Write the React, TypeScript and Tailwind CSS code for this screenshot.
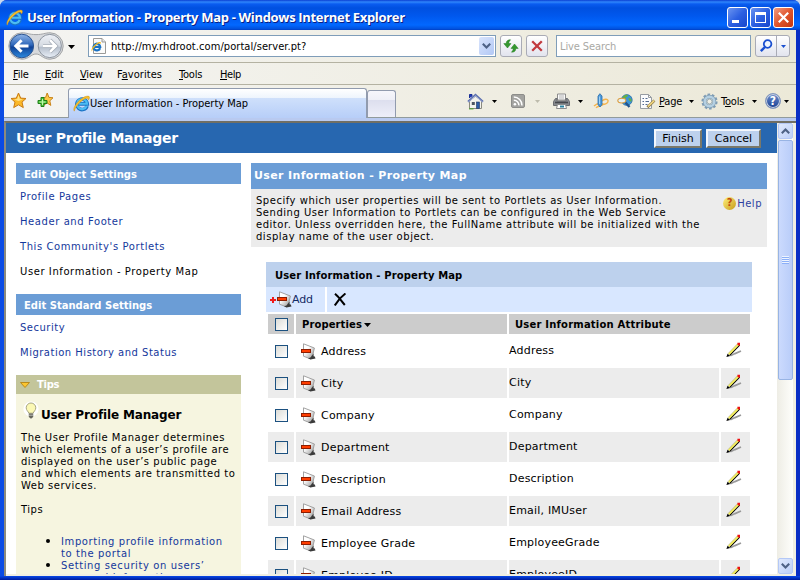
import type { ReactNode } from "react";

const properties = [
  { name: "Address", attribute: "Address" },
  { name: "City", attribute: "City" },
  { name: "Company", attribute: "Company" },
  { name: "Department", attribute: "Department" },
  { name: "Description", attribute: "Description" },
  { name: "Email Address", attribute: "Email, IMUser" },
  { name: "Employee Grade", attribute: "EmployeeGrade" },
  { name: "Employee ID", attribute: "EmployeeID" },
];

const objectLinks = ["Profile Pages", "Header and Footer", "This Community's Portlets"];
const standardLinks = ["Security", "Migration History and Status"];

function IELogo({ size }: { size: number }) {
  return (
    <svg width={size} height={size} viewBox="0 0 16 16" className="shrink-0">
      <path
        d="M13.2 10.3A4.9 4.9 0 1 1 13.4 8.4H5.4"
        fill="none"
        stroke="#1a72c4"
        strokeWidth="3.4"
      />
      <path d="M12.9 10.2A4.7 4.7 0 1 1 13.2 8.2H5.4" fill="none" stroke="#4cbcf2" strokeWidth="2" />
      <path
        d="M1.2 15.2C-.8 12.4 4 6 8.4 3.2C11.6 1 15.4 .2 15.5 2.2C15.6 3.2 14.9 4.2 14.4 4.8C14.4 2.4 12 2.8 9.4 4.6C5.4 7.4 1.8 12 1.2 15.2Z"
        fill="#f9c02a"
        stroke="#c98a12"
        strokeWidth=".4"
      />
    </svg>
  );
}

function Arrow({ color = "#000000" }: { color?: string }) {
  return (
    <svg width="5" height="3" viewBox="0 0 5 3" className="shrink-0">
      <path d="M0 0H5L2.5 3Z" fill={color} />
    </svg>
  );
}

function NavButtons() {
  return (
    <svg width="56" height="28" viewBox="0 0 56 28" className="shrink-0">
      <defs>
        <linearGradient id="back" x1="0" y1="0" x2="0" y2="1">
          <stop offset="0" stopColor="#8fb4e6" />
          <stop offset=".45" stopColor="#2f68bb" />
          <stop offset=".55" stopColor="#104296" />
          <stop offset="1" stopColor="#2d8be0" />
        </linearGradient>
        <linearGradient id="fwd" x1="0" y1="0" x2="0" y2="1">
          <stop offset="0" stopColor="#eef1f6" />
          <stop offset=".5" stopColor="#d5dae2" />
          <stop offset=".56" stopColor="#b6bfcc" />
          <stop offset="1" stopColor="#eaf0f8" />
        </linearGradient>
      </defs>
      <path
        d="M14 .8C19 .8 21 2.6 28 2.6S37 .8 42 .8A13.2 13.2 0 0 1 42 27.2C35 27.2 33 22 28 22S21 27.2 14 27.2A13.2 13.2 0 0 1 14 .8Z"
        fill="#d7d9dc"
        stroke="#a2a4a6"
      />
      <circle cx="13.8" cy="14" r="11.8" fill="url(#back)" stroke="#2c5592" strokeWidth="1" />
      <circle cx="41.8" cy="14" r="11.6" fill="url(#fwd)" stroke="#8d959f" strokeWidth="1" />
      <path d="M20.5 14H8M13.6 8.2L7.8 14L13.6 19.8" fill="none" stroke="#ffffff" strokeWidth="3" />
      <path d="M35 14H47.5M42 8.2L47.8 14L42 19.8" fill="none" stroke="#9ea6b2" strokeWidth="4" />
      <path d="M35 14H47.5M42 8.2L47.8 14L42 19.8" fill="none" stroke="#ffffff" strokeWidth="2.6" />
    </svg>
  );
}

function PageIcon() {
  return (
    <svg width="16" height="18" viewBox="0 0 16 18" className="shrink-0">
      <path d="M2.5 1.5H11L14.5 5V16.5H2.5Z" fill="#fbfbfa" stroke="#9a9a98" />
      <path d="M11 1.5V5H14.5" fill="#e6e6e6" stroke="#9a9a98" />
      <svg x="0" y="4" width="11" height="11" viewBox="0 0 16 16">
        <path d="M13.2 10.3A4.9 4.9 0 1 1 13.4 8.4H5.4" fill="none" stroke="#1a72c4" strokeWidth="3.2" />
        <path d="M1.2 15.2C-.8 12.4 4 6 8.4 3.2C11.6 1 15.4 .2 14.4 4.8C14.4 2.4 12 2.8 9.4 4.6C5.4 7.4 1.8 12 1.2 15.2Z" fill="#f5b91e" />
      </svg>
    </svg>
  );
}

function FavoriteStar() {
  return (
    <svg width="17" height="17" viewBox="0 0 17 17" className="shrink-0">
      <path
        d="M8.5 1L10.7 6.1L16 6.5L12 10.1L13.3 15.6L8.5 12.8L3.7 15.6L5 10.1L1 6.5L6.3 6.1Z"
        fill="#fbb829"
        stroke="#c87a14"
        strokeLinejoin="round"
      />
      <path d="M8.5 3L9.8 7L13 7.4L8.5 9L4 7.4L7.2 7Z" fill="#ffe38a" />
    </svg>
  );
}

function AddFavoriteStar() {
  return (
    <svg width="17" height="17" viewBox="0 0 17 17" className="shrink-0">
      <path
        d="M10.2 1L11.9 5.4L16 5.8L12.8 8.8L13.8 13.4L10.2 11L6 13.4L7.4 8.8L4.6 5.8L8.6 5.4Z"
        fill="#fdc94a"
        stroke="#c98217"
        strokeLinejoin="round"
      />
      <path d="M4 5.5H7V8.5H10V11.5H7V14.5H4V11.5H1V8.5H4Z" fill="#4fc940" stroke="#1f7f18" />
      <path d="M5.5 7V13M2.5 10H8.5" stroke="#c4f5b0" strokeWidth="1" />
    </svg>
  );
}

function HomeIcon() {
  return (
    <svg width="17" height="17" viewBox="0 0 17 17" className="shrink-0">
      <path d="M2.5 8V15.5H14.5V8L8.5 3Z" fill="#f3f3ee" stroke="#8a8a80" />
      <path d="M2.5 5V1.5H5V3.5" fill="#1f3bb8" stroke="#1a2f96" />
      <path d="M1 8.8L8.5 1.8L16 8.8" fill="none" stroke="#5b6fae" strokeWidth="2" />
      <path d="M1 9.4L8.5 2.8L16 9.4" fill="none" stroke="#c5cde6" strokeWidth=".7" />
      <rect x="9.5" y="9" width="3" height="6.5" fill="#2c5ca6" stroke="#1d3566" strokeWidth=".6" />
      <rect x="4.8" y="9" width="3" height="3" fill="#4d5563" />
      <path d="M2 15.8H6.5" stroke="#4f9a35" strokeWidth="1.2" />
    </svg>
  );
}

function FeedIcon() {
  return (
    <svg width="14" height="14" viewBox="0 0 14 14" className="shrink-0">
      <rect x=".5" y=".5" width="13" height="13" rx="1.5" fill="#a3a3a0" stroke="#8d8d8a" />
      <circle cx="3.9" cy="10.3" r="1.3" fill="#ffffff" />
      <path d="M2.8 6.2A5 5 0 0 1 7.9 11.4M2.8 3.1A8.2 8.2 0 0 1 11 11.4" fill="none" stroke="#ffffff" strokeWidth="1.5" />
    </svg>
  );
}

function PrinterIcon() {
  return (
    <svg width="17" height="17" viewBox="0 0 17 17" className="shrink-0">
      <path d="M4.5 1H12.5V7H4.5Z" fill="#fafafa" stroke="#8c8c8c" />
      <path d="M6 3H11M6 5H11" stroke="#b5b5b5" />
      <path d="M2.5 5.5H4V8H13V5.5H14.5L16.5 8.5V12.5H.5V8.5Z" fill="#888b90" stroke="#6a6c70" />
      <path d="M2 9.5H15" stroke="#45474c" strokeWidth="1.6" />
      <path d="M4.5 11.5H12.5L13.5 15.5H3.5Z" fill="#ffffff" stroke="#8c8c8c" />
      <rect x="7" y="12.5" width="4" height="2" fill="#2b82a0" />
    </svg>
  );
}

function BlogIcon() {
  return (
    <svg width="16" height="16" viewBox="0 0 16 16" className="shrink-0">
      <path d="M1 13C4 10 7 10 10 11C13 12 15.4 9.4 15 7.4C14.4 5.5 11 6 9 8M3 14.8C5 12.5 8 13.5 11 11" fill="none" stroke="#f6b44b" strokeWidth="1.4" />
      <path d="M5 3.2L6.9 .7L9 3V11.5L7 14L5 11.5Z" fill="#4b9bdc" stroke="#286aa8" strokeWidth=".8" />
      <path d="M6.6 3.5V11" stroke="#a9d6f6" />
    </svg>
  );
}

function ResearchIcon() {
  return (
    <svg width="17" height="16" viewBox="0 0 17 16" className="shrink-0">
      <circle cx="9.8" cy="7" r="5.4" fill="#3c95d6" stroke="#1f65a0" strokeWidth=".7" />
      <path d="M5.5 4.5C7 1.6 10 1.3 11 2.2C10.8 4 8 4.6 8.2 6.5C6.5 7 5.5 6.2 5.5 4.5ZM11.5 5C13.5 4.6 14.8 6 14.6 8.5C13.3 9 11.6 7.6 11.5 5Z" fill="#67b244" />
      <ellipse cx="4.8" cy="7.6" rx="4" ry="2.4" fill="#e4f0f6" stroke="#dc9c3c" strokeWidth="1.1" />
      <path d="M8.5 9.5L12.5 14" stroke="#22558e" strokeWidth="2.4" />
    </svg>
  );
}

function PageMenuIcon() {
  return (
    <svg width="17" height="17" viewBox="0 0 17 17" className="shrink-0">
      <path d="M1.5 1.5H9.5L12.5 4.5V15.5H1.5Z" fill="#fbfcfd" stroke="#979ca2" />
      <path d="M9.5 1.5V4.5H12.5" fill="none" stroke="#979ca2" />
      <path d="M3.5 5.5H5M6.5 5.5H8.5M3.5 8.5H5M6.5 8.5H10M3.5 11.5H5M6.5 11.5H8.5" stroke="#546b91" />
      <path d="M8.4 14.2L15.4 7.6" stroke="#8b7748" strokeWidth="2.8" />
      <path d="M9 13.5L15.2 7.6" stroke="#f4da82" strokeWidth="1.5" />
    </svg>
  );
}

function GearIcon() {
  return (
    <svg width="17" height="17" viewBox="0 0 17 17" className="shrink-0">
      <circle cx="8.5" cy="8.5" r="7" fill="none" stroke="#7f9cb4" strokeWidth="2.2" strokeDasharray="2.6 1.8" />
      <circle cx="8.5" cy="8.5" r="4.9" fill="none" stroke="#7f9db3" strokeWidth="3.6" />
      <circle cx="8.5" cy="8.5" r="4.8" fill="none" stroke="#b5d0e2" strokeWidth="2.5" />
      <circle cx="8.5" cy="8.5" r="2.5" fill="#f0efe4" stroke="#7790a4" strokeWidth=".7" />
    </svg>
  );
}

function HelpBadge() {
  return (
    <span className="flex h-4 w-4 shrink-0 items-center justify-center rounded-full border border-[#8397bd] bg-linear-to-b from-[#7090cf] to-[#173e92] text-[12px] leading-none font-bold text-white ring-1 ring-[#c9d2e0] ring-inset">
      ?
    </span>
  );
}

function ScrollChevron({ up = false }: { up?: boolean }) {
  return (
    <svg width="9" height="6" viewBox="0 0 9 6" className={up ? "" : "rotate-180"}>
      <path d="M.8 5.2L4.5 1.5L8.2 5.2" fill="none" stroke="#4d6185" strokeWidth="2.1" />
    </svg>
  );
}

function PropertyIcon() {
  return (
    <svg width="15" height="17" viewBox="0 0 15 17" className="shrink-0">
      <defs>
        <linearGradient id="sheet" x1="0" y1="0" x2="1" y2="1">
          <stop offset=".35" stopColor="#ffffff" />
          <stop offset="1" stopColor="#8c8c8c" />
        </linearGradient>
      </defs>
      <path d="M2.5 .8L13.4 5L12 11L9.3 15.8L2.5 13.2Z" fill="url(#sheet)" stroke="#999999" strokeWidth=".9" />
      <path d="M7 15.2L9.5 16.4L14.5 15.4L13.8 13.6L12.6 13.2V10.4L9.5 14.4Z" fill="#3a3a3a" />
      <rect x=".5" y="6.5" width="9" height="3" fill="#ff3d00" stroke="#8f1d00" />
    </svg>
  );
}

function PencilIcon() {
  return (
    <svg width="16" height="16" viewBox="0 0 16 16" className="shrink-0">
      <path d="M4.4 13.8L9 11.6L15 9" fill="none" stroke="#9a9a9a" strokeWidth="1.7" />
      <path d="M3.6 13.2L13.6 3" stroke="#000000" strokeWidth="1.3" />
      <path d="M2.2 11.6L11.8 1.8" stroke="#8f8a3a" strokeWidth=".8" />
      <path d="M2.8 12.4L12.6 2.4" stroke="#f6f05a" strokeWidth="1.7" />
      <path d="M.4 15L1.6 11.8L4.2 14Z" fill="#000000" />
      <path d="M11.4 .8H14V3.6H12.4L11.4 2.8Z" fill="#ee1111" />
    </svg>
  );
}

function Checkbox() {
  return <span className="h-[13px] w-[13px] shrink-0 border border-[#1c5180] bg-linear-to-br from-[#dcdcd7] to-white" />;
}

function ToolButton({ children }: { children: ReactNode }) {
  return (
    <span className="flex h-[22px] w-[22px] shrink-0 items-center justify-center rounded-[3px] border border-[#a9abb5] bg-linear-to-b from-white via-[#f1f1f6] to-[#e2e4ee]">
      {children}
    </span>
  );
}

function SectionHeading({ children }: { children: ReactNode }) {
  return (
    <h2 className="flex h-[21px] items-center bg-[#6b9dd6] pt-px pl-2 text-[10px] font-bold text-white">
      {children}
    </h2>
  );
}

function TitleBar() {
  return (
    <header className="flex h-[30px] shrink-0 items-center bg-[linear-gradient(#0a3fd2_0px,#2f86fb_2px,#0a5cf0_4px,#0050e0_8px,#0058ee_16px,#0268ff_25px,#0150dc_29px,#003cc0_30px)] pt-1 pr-1.5 pl-[6px]">
      <IELogo size={17} />
      <h1 className="ml-1 font-['Open_Sans',sans-serif] text-[13px] leading-4 font-bold tracking-[-0.32px] whitespace-nowrap text-white [text-shadow:1px_1px_#0a1f84]">
        User Information - Property Map - Windows Internet Explorer
      </h1>
      <div className="ml-auto flex gap-0.5">
        <span className="flex h-[21px] w-[21px] rounded-[3px] border border-white bg-linear-to-br from-[#6b93f0] via-[#2c60e2] to-[#1746cc] pt-3 pl-1">
          <span className="h-[3px] w-[7px] bg-white" />
        </span>
        <span className="flex h-[21px] w-[21px] items-center justify-center rounded-[3px] border border-white bg-linear-to-br from-[#6b93f0] via-[#2c60e2] to-[#1746cc]">
          <span className="h-[11px] w-[11px] border border-t-[3px] border-white" />
        </span>
        <span className="flex h-[21px] w-[21px] items-center justify-center rounded-[3px] border border-white bg-linear-to-br from-[#f09a80] via-[#e0552c] to-[#c4350c]">
          <svg width="11" height="11" viewBox="0 0 11 11">
            <path d="M.8.8L10.2 10.2M10.2.8L.8 10.2" stroke="#ffffff" strokeWidth="2.2" />
          </svg>
        </span>
      </div>
    </header>
  );
}

function AddressRow() {
  return (
    <div className="flex h-8 shrink-0 items-center bg-linear-to-r from-[#f4f4f2] to-[#ece9d8] pl-1">
      <NavButtons />
      <svg width="7" height="4" viewBox="0 0 7 4" className="mt-0.5 ml-1 shrink-0">
        <path d="M0 0H7L3.5 4Z" fill="#000000" />
      </svg>
      <div className="ml-[13px] flex h-[22px] w-[408px] shrink-0 items-center border border-[#7f9db9] bg-white pr-px pl-0.5 text-[11px]">
        <PageIcon />
        <span className="ml-1 pt-0.5 tracking-[0.07px] whitespace-nowrap">http://my.rhdroot.com/portal/server.pt?</span>
        <span className="ml-auto flex h-[18px] w-[15px] items-center justify-center rounded-[2px] bg-linear-to-br from-[#d9e4fc] to-[#b2c8f5]">
          <ScrollChevron />
        </span>
      </div>
      <div className="ml-1 flex shrink-0 gap-1">
        <ToolButton>
          <svg width="16" height="14" viewBox="0 0 16 14" className="shrink-0">
            <path d="M7.5 .8C5 .8 3.2 1.8 3.2 4.6H.8L4.5 9L8 4.6H5.8C5.8 3 6.4 2.2 7.5 .8Z" fill="#35982f" stroke="#1f7a1c" strokeWidth=".5" />
            <path d="M8.5 13.2C11 13.2 12.8 12.2 12.8 9.4H15.2L11.5 5L8 9.4H10.2C10.2 11 9.6 11.8 8.5 13.2Z" fill="#35982f" stroke="#1f7a1c" strokeWidth=".5" />
          </svg>
        </ToolButton>
        <ToolButton>
          <svg width="12" height="12" viewBox="0 0 12 12">
            <path d="M1.2 1.2L10.8 10.8M10.8 1.2L1.2 10.8" stroke="#c23a3e" strokeWidth="2.3" />
          </svg>
        </ToolButton>
      </div>
      <div className="ml-2 flex h-[22px] w-[195px] shrink-0 items-center border border-[#7f9db9] bg-white pt-0.5 pl-[3px] text-[11px] tracking-[-0.1px] text-[#a9a9a4]">
        Live Search
      </div>
      <div className="ml-1 flex h-[22px] w-[35px] shrink-0 rounded-[3px] border border-[#a9abb5] bg-linear-to-b from-white to-[#e2e4ee]">
        <span className="flex w-[21px] items-center justify-center border-r border-[#a9abb5]">
          <svg width="14" height="14" viewBox="0 0 14 14">
            <circle cx="8.6" cy="5" r="3.8" fill="#eef5ff" stroke="#1a4fd0" strokeWidth="1.8" />
            <path d="M6 8L1.8 12.2" stroke="#1a4fd0" strokeWidth="2.4" />
          </svg>
        </span>
        <span className="flex flex-1 items-center justify-center">
          <Arrow color="#1a4fd0" />
        </span>
      </div>
    </div>
  );
}

function MenuBar() {
  return (
    <nav className="flex h-[23px] shrink-0 items-center border-y border-b-[#b4b2a2] border-t-[#b4b2a2] bg-linear-to-r from-[#f4f4f2] to-[#ece9d8] pt-[3px] pl-[9px] text-[11px] tracking-[-0.2px]">
      <span className="w-8"><u>F</u>ile</span>
      <span className="w-[35px]"><u>E</u>dit</span>
      <span className="w-[37px]"><u>V</u>iew</span>
      <span className="w-[62px] tracking-[0.05px]">F<u>a</u>vorites</span>
      <span className="w-[41px]"><u>T</u>ools</span>
      <span className="tracking-[-0.4px]"><u>H</u>elp</span>
    </nav>
  );
}

function TabRow() {
  return (
    <div className="flex h-[33px] shrink-0 bg-linear-to-r from-[#f4f4f2] to-[#ece9d8] text-[11px]">
      <div className="flex w-16 shrink-0 items-center gap-2.5 border-b border-[#919b9c] pb-0.5 pl-1.5">
        <FavoriteStar />
        <AddFavoriteStar />
      </div>
      <div className="mt-[3px] flex w-[299px] shrink-0 items-center rounded-t-[3px] border border-b-0 border-[#919bae] bg-[linear-gradient(#ffffff,#eef5fd_30%,#cfe0fb_31%,#b7cef8)] pl-1">
        <IELogo size={17} />
        <span className="pt-0.5 tracking-[-0.02px] whitespace-nowrap">User Information - Property Map</span>
      </div>
      <div className="flex flex-1 border-b border-[#919b9c] pt-[5px]">
        <span className="w-[29px] shrink-0 rounded-t-[3px] border border-b-0 border-[#919bae] bg-[linear-gradient(#f6f6fb,#eeeff7_35%,#dddfee_36%,#eeeff9)]" />
      </div>
      <div className="flex w-[329px] shrink-0 items-center border-b border-[#919b9c]">
        <HomeIcon />
        <span className="ml-[8px]"><Arrow /></span>
        <span className="ml-[14px]"><FeedIcon /></span>
        <span className="ml-[10px]"><Arrow color="#bdbbac" /></span>
        <span className="ml-[13px]"><PrinterIcon /></span>
        <span className="ml-2"><Arrow /></span>
        <span className="ml-2.5"><BlogIcon /></span>
        <span className="ml-2"><ResearchIcon /></span>
        <span className="ml-[5px]"><PageMenuIcon /></span>
        <span className="ml-[3px] w-7 pt-[3px] tracking-[-0.2px]"><u>P</u>age</span>
        <span className="ml-0.5"><Arrow /></span>
        <span className="ml-[7px]"><GearIcon /></span>
        <span className="ml-[3px] w-[27px] pt-[3px] tracking-[-0.2px]">T<u>o</u>ols</span>
        <span className="ml-1"><Arrow /></span>
        <span className="ml-2"><HelpBadge /></span>
        <span className="ml-[3px]"><Arrow /></span>
      </div>
    </div>
  );
}

function Sidebar() {
  return (
    <aside className="w-[225px] shrink-0 text-[10px]">
      <SectionHeading>Edit Object Settings</SectionHeading>
      <ul className="pl-1 tracking-[0.58px] text-[#14389c]">
        {objectLinks.map((link) => (
          <li key={link} className="h-[25px] leading-[25px] whitespace-nowrap">{link}</li>
        ))}
        <li className="h-[25px] leading-[25px] whitespace-nowrap text-black">User Information - Property Map</li>
      </ul>
      <div className="mt-2.5">
        <SectionHeading>Edit Standard Settings</SectionHeading>
      </div>
      <ul className="pl-1 tracking-[0.5px] text-[#14389c]">
        {standardLinks.map((link) => (
          <li key={link} className="h-[25px] leading-[25px] whitespace-nowrap">{link}</li>
        ))}
      </ul>
      <div className="mt-2.5 flex h-[19px] items-center bg-[#c3c59b] pl-1 text-[10px] font-bold tracking-[-0.3px] text-white">
        <svg width="10" height="6" viewBox="0 0 10 6" className="mr-[7px]">
          <path d="M.5.5H9.5L5 5.5Z" fill="#fbc52f" stroke="#b98a1c" />
        </svg>
        Tips
      </div>
      <div className="h-[200px] bg-[#f6f5e0] pl-[5px]">
        <div className="flex h-[38px] items-center pl-0.5">
          <svg width="16" height="20" viewBox="0 0 16 20" className="mb-1 shrink-0">
            <circle cx="8" cy="8" r="7.6" fill="#ffffff" />
            <path d="M5.8 12.2C5.5 10.5 3.2 9.5 3.2 6.8A4.8 4.8 0 0 1 12.8 6.8C12.8 9.5 10.5 10.5 10.2 12.2Z" fill="#fbf8b4" stroke="#a9a783" />
            <path d="M5.8 12.5H10.2V16L8 17.8L5.8 16Z" fill="#66665e" />
            <path d="M5.8 14.2H10.2" stroke="#bdbdb2" />
          </svg>
          <h3 className="mt-1 ml-0.5 text-[12px] font-bold tracking-[-0.15px] whitespace-nowrap">User Profile Manager</h3>
        </div>
        <p className="leading-3 tracking-[0.52px] whitespace-nowrap">
          The User Profile Manager determines
          <br />
          which elements of a user’s profile are
          <br />
          displayed on the user’s public page
          <br />
          and which elements are transmitted to
          <br />
          Web services.
        </p>
        <p className="mt-3 leading-3 tracking-[0.5px]">Tips</p>
        <ul className="mt-[19px] list-disc pl-10 leading-3 tracking-[0.6px] whitespace-nowrap text-[#14389c] marker:text-[13px] marker:text-black">
          <li className="h-6">
            Importing profile information
            <br />
            to the portal
          </li>
          <li className="h-6">
            Setting security on users’
            <br />
            personal information
          </li>
        </ul>
      </div>
    </aside>
  );
}

function PropertyTable() {
  return (
    <section className="mt-[15px] ml-[15px] w-[486px]">
      <h3 className="flex h-[25px] items-center bg-[#bdd1ed] pt-px pl-[9px] text-[10px] font-bold tracking-[0.13px]">
        User Information - Property Map
      </h3>
      <div className="flex h-[25px] gap-0.5 text-[11px]">
        <div className="flex w-[59px] items-center bg-[#d8e7ff] pl-1">
          <svg width="6" height="6" viewBox="0 0 6 6">
            <path d="M3 0V6M0 3H6" stroke="#ef1c1c" strokeWidth="2" />
          </svg>
          <span className="ml-px"><PropertyIcon /></span>
          <span className="pt-0.5 tracking-[-0.1px] text-[#132a63]">Add</span>
        </div>
        <div className="flex flex-1 items-center bg-[#d8e7ff] pl-[7px]">
          <svg width="12" height="13" viewBox="0 0 12 13">
            <path d="M1 .8L3.8 3.4L10.8 12M11.5 .5C8 3 3.4 8 .8 12.4" fill="none" stroke="#000000" strokeWidth="2" />
          </svg>
        </div>
      </div>
      <div className="mt-0.5 ml-0.5 grid w-[482px] grid-cols-[26px_211px_241px] gap-0.5 text-[10px] font-bold">
        <div className="flex h-5 items-center bg-[#cccccc] pl-[7px]"><Checkbox /></div>
        <div className="flex h-5 items-center bg-[#cccccc] pt-px pl-1.5 tracking-[0.1px]">
          Properties
          <svg width="7" height="4" viewBox="0 0 7 4" className="ml-0.5">
            <path d="M0 0H7L3.5 4Z" fill="#000000" />
          </svg>
        </div>
        <div className="flex h-5 items-center bg-[#cccccc] pt-px pl-1.5 tracking-[0.2px]">User Information Attribute</div>
      </div>
      <div className="mt-0.5 ml-0.5 flex w-[482px] flex-col gap-0.5 text-[11px] tracking-[0.2px]">
        {properties.map(({ name, attribute }) => (
          <div
            key={name}
            className="group grid h-[30px] grid-cols-[26px_211px_210px_29px] gap-0.5"
          >
            <div className="flex items-center pt-px pl-[7px] group-even:bg-[#ececec]"><Checkbox /></div>
            <div className="flex items-center gap-[5px] pl-[5px] group-even:bg-[#ececec]">
              <PropertyIcon />
              <span className="pt-[3px]">{name}</span>
            </div>
            <div className="flex items-center pt-px group-even:bg-[#ececec]">{attribute}</div>
            <div className="flex items-center pb-0.5 pl-[5px] group-even:bg-[#ececec]"><PencilIcon /></div>
          </div>
        ))}
      </div>
    </section>
  );
}

function Scrollbar() {
  return (
    <div className="flex h-full w-4 shrink-0 flex-col bg-linear-to-r from-[#eeede5] to-[#fefefb] pl-px">
      <span className="flex h-4 items-center justify-center rounded-[2px] border border-[#b4c8f6] bg-linear-to-br from-[#e0e9fd] to-[#bccff8]">
        <ScrollChevron up />
      </span>
      <span className="mt-px flex h-[240px] flex-col items-center justify-center rounded-[2px] border border-[#98b4e4] bg-linear-to-r from-[#cbdafd] to-[#b9cdf9]">
        <span className="h-px w-[7px] bg-[#eef4fe]" />
        <span className="h-px w-[7px] bg-[#8cb0f8]" />
        <span className="h-px w-[7px] bg-[#eef4fe]" />
        <span className="h-px w-[7px] bg-[#8cb0f8]" />
        <span className="h-px w-[7px] bg-[#eef4fe]" />
        <span className="h-px w-[7px] bg-[#8cb0f8]" />
        <span className="h-px w-[7px] bg-[#eef4fe]" />
        <span className="h-px w-[7px] bg-[#8cb0f8]" />
      </span>
      <span className="mt-auto flex h-4 items-center justify-center rounded-[2px] border border-[#b4c8f6] bg-linear-to-br from-[#e0e9fd] to-[#bccff8]">
        <ScrollChevron />
      </span>
    </div>
  );
}

function PortalPage() {
  return (
    <div className="flex h-[451px] w-[771px] shrink-0 flex-col overflow-hidden bg-white">
      <div className="flex h-[30px] shrink-0 items-center bg-[#2767b0] pr-[16px] pl-2.5">
        <h2 className="text-[14px] font-bold tracking-[-0.26px] text-white">User Profile Manager</h2>
        <div className="ml-auto flex gap-1 text-[11px]">
          <button className="h-[19px] w-12 border-2 border-t-[#f4f7fc] border-r-[#7a7869] border-b-[#7a7869] border-l-[#f4f7fc] bg-[#bdd1ed] leading-none">
            Finish
          </button>
          <button className="h-[19px] w-[55px] border-2 border-t-[#f4f7fc] border-r-[#7a7869] border-b-[#7a7869] border-l-[#f4f7fc] bg-[#bdd1ed] leading-none">
            Cancel
          </button>
        </div>
      </div>
      <div className="flex gap-2.5 pt-2.5 pl-2.5">
        <Sidebar />
        <main className="w-[516px] shrink-0">
          <h2 className="flex h-[26px] items-center bg-[#6b9dd6] pt-px pl-[3px] text-[11px] font-bold tracking-[0.36px] text-white">
            User Information - Property Map
          </h2>
          <div className="flex h-[58px] justify-between bg-[#ececec] pt-1.5 pr-[5px] pl-[5px] text-[10px]">
            <p className="leading-3 tracking-[0.52px] whitespace-nowrap">
              Specify which user properties will be sent to Portlets as User Information.
              <br />
              Sending User Information to Portlets can be configured in the Web Service
              <br />
              editor. Unless overridden here, the FullName attribute will be initialized with the
              <br />
              display name of the user object.
            </p>
            <div className="flex h-4 items-center gap-px tracking-[0.5px] text-[#2c3fa0]">
              <span className="flex h-[13px] w-[13px] items-center justify-center rounded-full bg-linear-to-br from-[#fff27a] to-[#c79a00] text-[10px] leading-none font-bold tracking-normal text-[#c04a10]">
                ?
              </span>
              Help
            </div>
          </div>
          <PropertyTable />
        </main>
      </div>
    </div>
  );
}

export default function App() {
  return (
    <div className="h-[580px] w-[800px] overflow-hidden bg-[#c9d8ef] font-['DejaVu_Sans',Verdana,sans-serif] text-black">
      <div className="flex h-[580px] flex-col overflow-hidden rounded-t-[7px] bg-[#0b3fd8]">
        <TitleBar />
        <div className="flex h-[546px] flex-col border-x-4 border-r-[#0a2fc4] border-l-[#0b4be4] bg-[#ece9d8]">
          <div className="font-['DejaVu_Sans_Condensed',Tahoma,sans-serif]">
            <AddressRow />
            <MenuBar />
            <TabRow />
            <div className="h-[3px] bg-[#b9caf0]" />
          </div>
          <div className="flex h-[455px] border-t-2 border-l-2 border-t-[#716f64] border-l-[#8c8a7d] bg-[#f1efe2] pb-0.5">
            <PortalPage />
            <Scrollbar />
          </div>
        </div>
        <div className="h-1 bg-linear-to-b from-[#0a48e8] to-[#001a9c]" />
      </div>
    </div>
  );
}
